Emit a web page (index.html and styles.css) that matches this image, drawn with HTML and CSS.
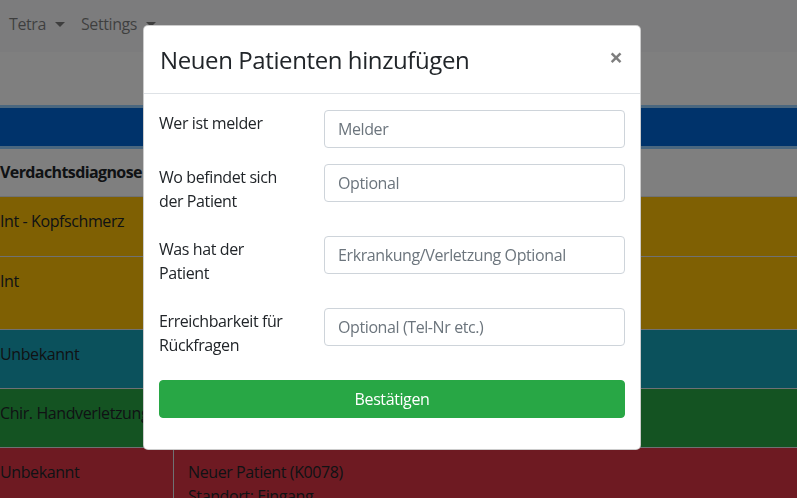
FILE: index.html
```html
<!DOCTYPE html>
<html lang="de">
<head>
<meta charset="utf-8">
<title>Tetra</title>
<link rel="stylesheet" href="styles.css">
</head>
<body>
<nav class="navbar">
  <a class="nav-link">Tetra<span class="caret"></span></a>
  <a class="nav-link">Settings<span class="caret"></span></a>
</nav>
<div class="spacer"></div>
<div class="table">
  <div class="row row-blue"></div>
  <div class="row row-head"><div class="c1">Verdachtsdiagnose</div><div class="c2"></div></div>
  <div class="row row-yellow h59"><div class="c1">Int - Kopfschmerz</div><div class="c2"></div></div>
  <div class="row row-yellow h72"><div class="c1">Int</div><div class="c2"></div></div>
  <div class="row row-teal h58"><div class="c1">Unbekannt</div><div class="c2"></div></div>
  <div class="row row-green h58"><div class="c1">Chir. Handverletzung</div><div class="c2"></div></div>
  <div class="row row-red h72"><div class="c1">Unbekannt</div><div class="c2 divided">Neuer Patient (K0078)<br>Standort: Eingang</div></div>
</div>

<div class="backdrop"></div>
<div class="modal">
  <div class="modal-content">
    <div class="modal-header">
      <h5 class="modal-title">Neuen Patienten hinzufügen</h5>
      <button class="close" type="button">×</button>
    </div>
    <div class="modal-body">
      <div class="form-row">
        <label class="form-label">Wer ist melder</label>
        <input class="form-control" type="text" placeholder="Melder">
      </div>
      <div class="form-row">
        <label class="form-label">Wo befindet sich der Patient</label>
        <input class="form-control" type="text" placeholder="Optional">
      </div>
      <div class="form-row">
        <label class="form-label">Was hat der Patient</label>
        <input class="form-control" type="text" placeholder="Erkrankung/Verletzung Optional">
      </div>
      <div class="form-row">
        <label class="form-label">Erreichbarkeit für Rückfragen</label>
        <input class="form-control" type="text" placeholder="Optional (Tel-Nr etc.)">
      </div>
      <button class="btn-success" type="button">Bestätigen</button>
    </div>
  </div>
</div>
</body>
</html>
```
FILE: styles.css
```css
* { box-sizing: border-box; }
html, body { margin: 0; height: 100%; overflow: hidden; }
body {
  font-family: "Open Sans", "Noto Sans", sans-serif;
  font-size: 16px;
  line-height: 24px;
  letter-spacing: -0.4px;
  color: #212529;
  background: #fff;
}
.navbar {
  height: 52px;
  background: #f8f9fa;
  display: flex;
  align-items: center;
  padding: 0 0 4px 1px;
}
.nav-link {
  color: rgba(0,0,0,.5);
  padding: 0 8px;
  display: flex;
  align-items: center;
}
.caret {
  display: inline-block;
  margin-left: 9px;
  border-top: 5px solid;
  border-left: 5px solid transparent;
  border-right: 5px solid transparent;
}
.spacer { height: 53px; }
.row {
  display: flex;
  border-top: 1px solid #dee2e6;
}
.c1 { width: 173px; padding: 12px 0 0 0; white-space: nowrap; overflow: hidden; }
.c2 { flex: 1; padding: 12px 14px 0; }
.c2.divided { border-left: 1px solid #dee2e6; }
.row-blue {
  height: 44px;
  background: #0066d6;
  border-top: 3px solid #94cfff;
  border-bottom: 3px solid #94cfff;
}
.row-head { height: 47px; background: #fff; border-top: 0; }
.row-head .c1 { font-weight: 700; padding-top: 11px; letter-spacing: -0.6px; }
.row-yellow { background: #ffc107; }
.row-teal { background: #17a2b8; }
.row-green { background: #28a745; }
.row-red { background: #dc3545; }
.h59 { height: 60px; }
.h72 { height: 73px; }
.h58 { height: 59px; }

.backdrop {
  position: fixed;
  inset: 0;
  background: rgba(0,0,0,.5);
}
.modal {
  position: fixed;
  inset: 0;
  padding: 25px 0 0 143px;
}
.modal-content {
  width: 498px;
  background: #fff;
  border: 1px solid rgba(0,0,0,.2);
  border-radius: 5px;
}
.modal-header {
  display: flex;
  align-items: center;
  justify-content: space-between;
  height: 68px;
  padding: 0 16px;
  border-bottom: 1px solid #dee2e6;
}
.modal-title {
  margin: 0;
  font-size: 24px;
  font-weight: 500;
  line-height: 34px;
  letter-spacing: -0.4px;
  color: #212529;
}
.close {
  border: 0;
  background: none;
  padding: 0;
  margin: -6px 1px 0 0;
  font-family: inherit;
  font-size: 24px;
  line-height: 24px;
  font-weight: 700;
  color: #000;
  opacity: .5;
  text-shadow: 0 1px 0 #fff;
}
.modal-body { padding: 16px 15px 31px; }
.form-row {
  display: grid;
  grid-template-columns: 135px 1fr;
  column-gap: 30px;
  margin-bottom: 16px;
  align-items: start;
}
.form-label { padding: 1px 0 7px; }
.form-control {
  height: 38px;
  width: 100%;
  padding: 6px 13px;
  font-family: inherit;
  font-size: 16px;
  letter-spacing: -0.4px;
  color: #495057;
  background: #fff;
  border: 1px solid #ced4da;
  border-radius: 4px;
  outline: none;
}
.form-control::placeholder { color: #6c757d; opacity: 1; }
.btn-success {
  display: block;
  width: 100%;
  height: 38px;
  border: 1px solid #28a745;
  border-radius: 4px;
  background: #28a745;
  color: #fff;
  font-family: inherit;
  font-size: 16px;
  line-height: 24px;
  letter-spacing: -0.4px;
}
```
